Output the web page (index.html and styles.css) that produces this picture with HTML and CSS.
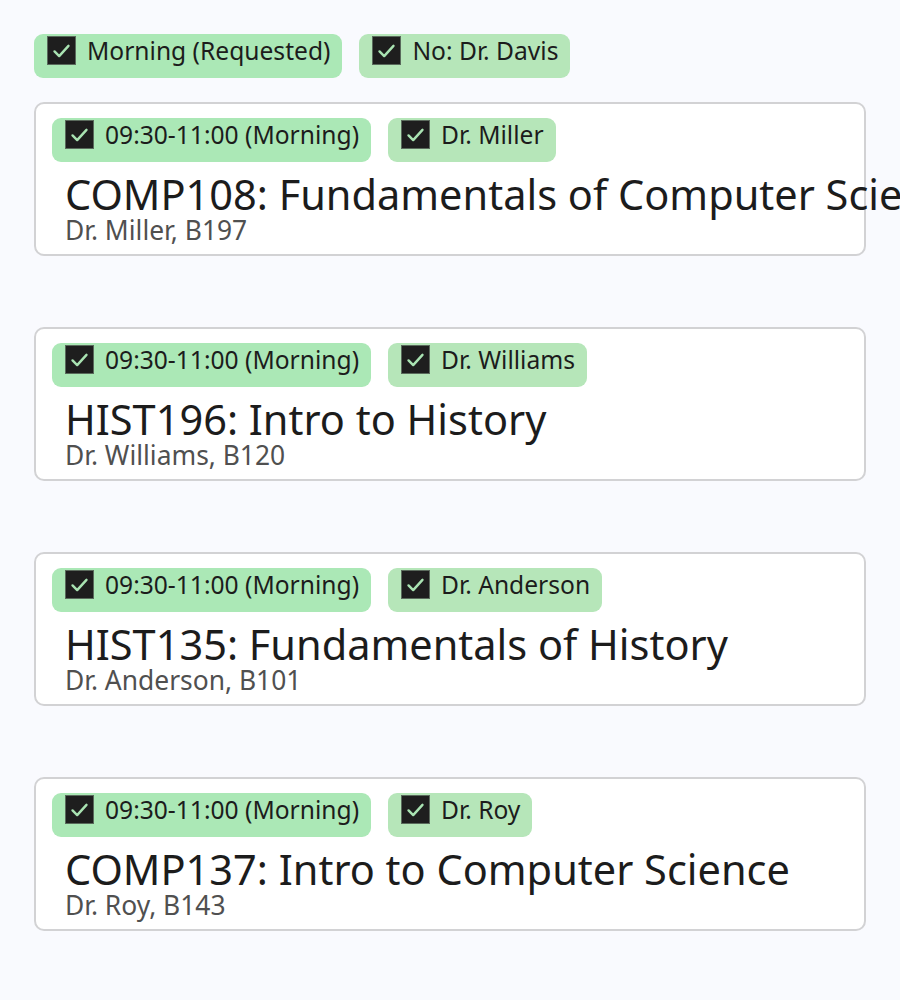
FILE: index.html
```html
<!DOCTYPE html>
<html>
<head>
<meta charset="utf-8">
<link rel="stylesheet" href="styles.css">
</head>
<body>
<main class="page">
  <div class="chips top-chips">
    <span class="chip chip-a"><span class="box"><svg viewBox="0 0 29 29"><path d="M7 15.5 L12 20.5 L22 9.5"/></svg></span><span class="chip-text">Morning (Requested)</span></span>
    <span class="chip chip-b"><span class="box"><svg viewBox="0 0 29 29"><path d="M7 15.5 L12 20.5 L22 9.5"/></svg></span><span class="chip-text">No: Dr. Davis</span></span>
  </div>

  <section class="card">
    <div class="chips">
      <span class="chip chip-a"><span class="box"><svg viewBox="0 0 29 29"><path d="M7 15.5 L12 20.5 L22 9.5"/></svg></span><span class="chip-text">09:30-11:00 (Morning)</span></span>
      <span class="chip chip-b"><span class="box"><svg viewBox="0 0 29 29"><path d="M7 15.5 L12 20.5 L22 9.5"/></svg></span><span class="chip-text">Dr. Miller</span></span>
    </div>
    <h2 class="title">COMP108: Fundamentals of Computer Science</h2>
    <p class="sub">Dr. Miller, B197</p>
  </section>

  <section class="card">
    <div class="chips">
      <span class="chip chip-a"><span class="box"><svg viewBox="0 0 29 29"><path d="M7 15.5 L12 20.5 L22 9.5"/></svg></span><span class="chip-text">09:30-11:00 (Morning)</span></span>
      <span class="chip chip-b"><span class="box"><svg viewBox="0 0 29 29"><path d="M7 15.5 L12 20.5 L22 9.5"/></svg></span><span class="chip-text">Dr. Williams</span></span>
    </div>
    <h2 class="title">HIST196: Intro to History</h2>
    <p class="sub">Dr. Williams, B120</p>
  </section>

  <section class="card">
    <div class="chips">
      <span class="chip chip-a"><span class="box"><svg viewBox="0 0 29 29"><path d="M7 15.5 L12 20.5 L22 9.5"/></svg></span><span class="chip-text">09:30-11:00 (Morning)</span></span>
      <span class="chip chip-b"><span class="box"><svg viewBox="0 0 29 29"><path d="M7 15.5 L12 20.5 L22 9.5"/></svg></span><span class="chip-text">Dr. Anderson</span></span>
    </div>
    <h2 class="title">HIST135: Fundamentals of History</h2>
    <p class="sub">Dr. Anderson, B101</p>
  </section>

  <section class="card">
    <div class="chips">
      <span class="chip chip-a"><span class="box"><svg viewBox="0 0 29 29"><path d="M7 15.5 L12 20.5 L22 9.5"/></svg></span><span class="chip-text">09:30-11:00 (Morning)</span></span>
      <span class="chip chip-b"><span class="box"><svg viewBox="0 0 29 29"><path d="M7 15.5 L12 20.5 L22 9.5"/></svg></span><span class="chip-text">Dr. Roy</span></span>
    </div>
    <h2 class="title">COMP137: Intro to Computer Science</h2>
    <p class="sub">Dr. Roy, B143</p>
  </section>
</main>
</body>
</html>
```
FILE: styles.css
```css
html, body {
  margin: 0;
  padding: 0;
  background: #f9fafe;
}
body {
  font-family: "Noto Sans", "Open Sans", sans-serif;
  color: #1c1c1c;
  overflow: hidden;
}
.page {
  padding: 34px 0 0 34px;
  width: 832px;
  display: flex;
  flex-direction: column;
  gap: 71px;
}
.top-chips {
  margin-bottom: -47px;
}
.chips {
  display: flex;
  gap: 17px;
}
.chip {
  display: inline-flex;
  align-items: center;
  box-sizing: border-box;
  height: 44px;
  padding: 2px 12px 13px 13px;
  border-radius: 9px;
  font-size: 24.6px;
  line-height: 29px;
  white-space: nowrap;
}
.chip-a { background: #abe8b6; }
.chip-b { background: #b6e6b9; }
.box {
  width: 29px;
  height: 29px;
  box-sizing: border-box;
  background: #1e1e1e;
  border: 1px solid #5a6a5c;
  margin-right: 11px;
  flex: none;
  display: block;
}
.box svg {
  display: block;
  width: 27px;
  height: 27px;
}
.box path {
  fill: none;
  stroke: #a9e3b2;
  stroke-width: 2.6;
  stroke-linecap: round;
  stroke-linejoin: round;
}
.card {
  background: #ffffff;
  border: 2px solid #d2d2d4;
  border-radius: 10px;
  padding: 14px 16px 10px;
  height: 154px;
  box-sizing: border-box;
}
.title {
  margin: 10px 0 0 13px;
  font-size: 41.5px;
  line-height: 44px;
  font-weight: 400;
  white-space: nowrap;
}
.sub {
  margin: 0 0 0 13px;
  font-size: 26.4px;
  line-height: 28px;
  color: #505050;
}
```
